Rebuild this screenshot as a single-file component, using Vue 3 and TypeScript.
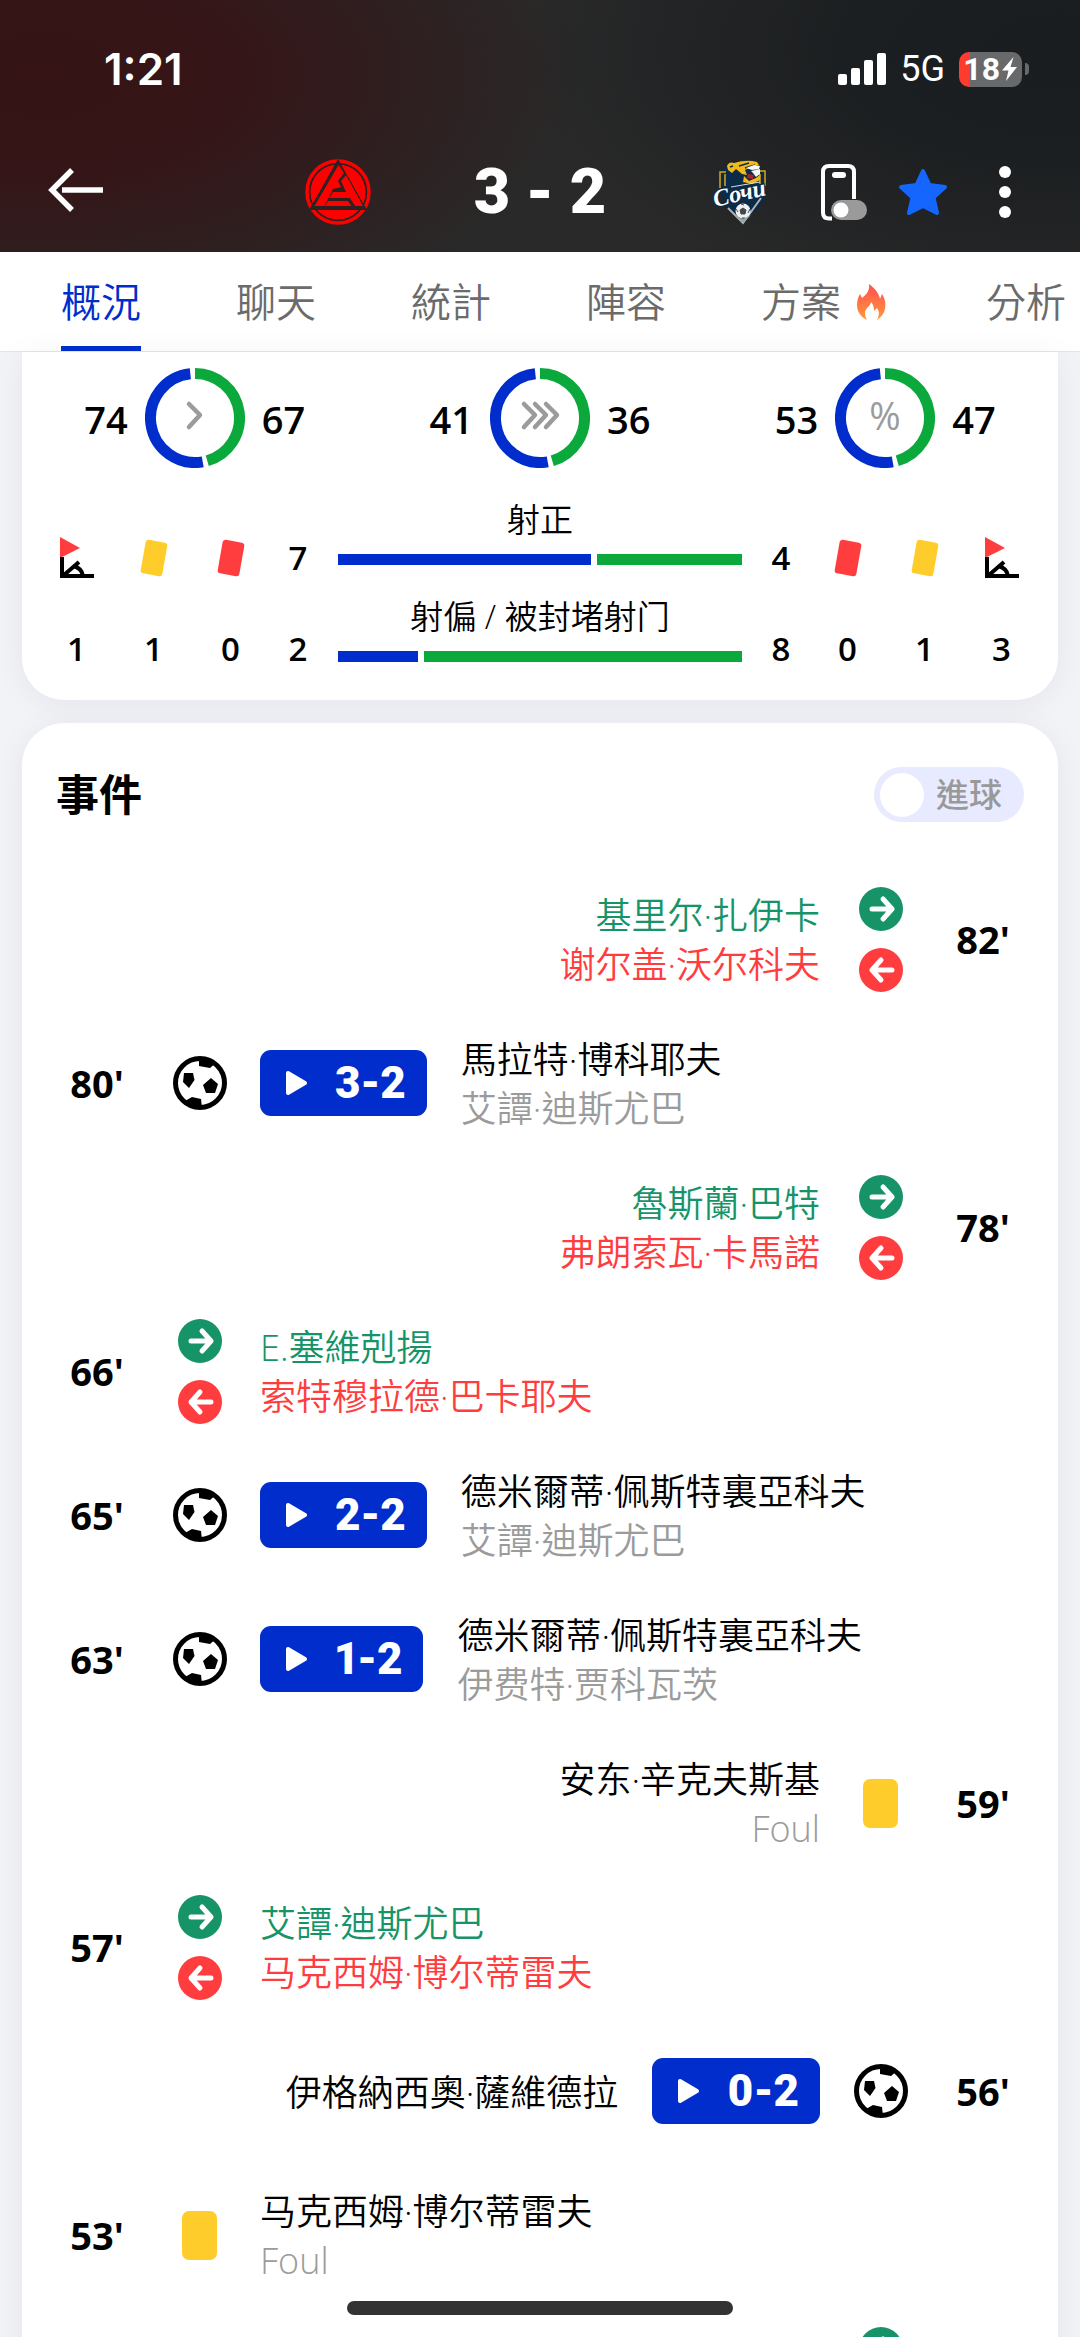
<script setup lang="ts">
import { ref } from 'vue'

type Side = 'home' | 'away'
type Kind = 'goal' | 'sub' | 'booked'

interface MatchEvent {
  minute: string
  side: Side
  kind: Kind
  first: string
  second?: string
  score?: string
}

interface Ring {
  home: number
  away: number
  icon: 'single' | 'triple' | 'percent'
}

const tabs = [
  { label: '概況', hot: false },
  { label: '聊天', hot: false },
  { label: '統計', hot: false },
  { label: '陣容', hot: false },
  { label: '方案', hot: true },
  { label: '分析', hot: false },
]
const activeTab = ref('概況')
const goalsOnly = ref(false)

const rings: Ring[] = [
  { home: 74, away: 67, icon: 'single' },
  { home: 41, away: 36, icon: 'triple' },
  { home: 53, away: 47, icon: 'percent' },
]

const homeCounts = [
  { icon: 'corner', value: 1 },
  { icon: 'yellow', value: 1 },
  { icon: 'red', value: 0 },
]
const awayCounts = [
  { icon: 'red', value: 0 },
  { icon: 'yellow', value: 1 },
  { icon: 'corner', value: 3 },
]
const shots = [
  { label: '射正', home: 7, away: 4 },
  { label: '射偏 / 被封堵射门', home: 2, away: 8 },
]

const events: MatchEvent[] = [
  { minute: "82'", side: 'away', kind: 'sub', first: '基里尔·扎伊卡', second: '谢尔盖·沃尔科夫' },
  { minute: "80'", side: 'home', kind: 'goal', score: '3-2', first: '馬拉特·博科耶夫', second: '艾譚·迪斯尤巴' },
  { minute: "78'", side: 'away', kind: 'sub', first: '魯斯蘭·巴特', second: '弗朗索瓦·卡馬諾' },
  { minute: "66'", side: 'home', kind: 'sub', first: 'E.塞維剋揚', second: '索特穆拉德·巴卡耶夫' },
  { minute: "65'", side: 'home', kind: 'goal', score: '2-2', first: '德米爾蒂·佩斯特裏亞科夫', second: '艾譚·迪斯尤巴' },
  { minute: "63'", side: 'home', kind: 'goal', score: '1-2', first: '德米爾蒂·佩斯特裏亞科夫', second: '伊费特·贾科瓦茨' },
  { minute: "59'", side: 'away', kind: 'booked', first: '安东·辛克夫斯基', second: 'Foul' },
  { minute: "57'", side: 'home', kind: 'sub', first: '艾譚·迪斯尤巴', second: '马克西姆·博尔蒂雷夫' },
  { minute: "56'", side: 'away', kind: 'goal', score: '0-2', first: '伊格納西奧·薩維德拉' },
  { minute: "53'", side: 'home', kind: 'booked', first: '马克西姆·博尔蒂雷夫', second: 'Foul' },
  { minute: '', side: 'away', kind: 'sub', first: '' },
]

// Arc on the ring's centre line around (50, 50); degrees clockwise from the top.
function arc(from: number, to: number): string {
  const point = (deg: number) => {
    const a = (deg * Math.PI) / 180
    return `${(50 + 44.5 * Math.sin(a)).toFixed(2)} ${(50 - 44.5 * Math.cos(a)).toFixed(2)}`
  }
  return `M${point(from)}A44.5 44.5 0 ${to - from > 180 ? 1 : 0} 1 ${point(to)}`
}
</script>

<template>
  <div class="screen">
    <header class="header">
      <div class="status">
        <span class="clock">1:21</span>
        <div class="status-right">
          <svg class="signal" width="48" height="32" viewBox="0 0 48 32" fill="#fff">
            <rect x="0" y="21" width="9" height="11" rx="2" />
            <rect x="13" y="15" width="9" height="17" rx="2" />
            <rect x="26" y="7" width="9" height="25" rx="2" />
            <rect x="39" y="0" width="9" height="32" rx="2" />
          </svg>
          <span class="network">5G</span>
          <div class="battery">
            <div class="battery-body">
              <span class="battery-text">18</span>
              <svg width="15" height="24" viewBox="0 0 15 24" fill="#fff"><path d="M11.500 0L0 13.500h6.500L4 24L15 10H8.500z" /></svg>
            </div>
            <span class="battery-nub"></span>
          </div>
        </div>
      </div>

      <div class="scorebar">
        <div class="bar-left">
          <button class="icon-btn" type="button" aria-label="返回">
            <svg width="58" height="46" viewBox="0 0 58 46" fill="none" stroke="#fff" stroke-width="5.500">
              <path d="M25 3L5 23L25 43" /><path d="M15 23H56" />
            </svg>
          </button>
        </div>
        <div class="scoreboard">
          <svg width="66" height="68" viewBox="0 0 66 68">
            <circle cx="33" cy="34" r="31" fill="none" stroke="#f00" stroke-width="3.500" />
            <circle cx="33" cy="34" r="27.500" fill="#f00" />
            <path d="M33 1L4 52H62z" fill="#2b2221" />
            <path d="M27 8Q10 14 6 36Q6 42 8 45L29 7zM39 8Q55 14 60 36Q60 42 58 45L37 7z" fill="#f00" />
            <path d="M33.500 7L39 15L33 23L36 29L28 31L19.500 48H9.500z" fill="#f00" />
            <path d="M41 17L58 48H50L45 40H24L28 34H41L36 23z" fill="#f00" />
            <path d="M23 43H43L46.500 48H20z" fill="#f00" />
          </svg>
          <h1 class="score">3 - 2</h1>
          <svg class="crest" width="66" height="68" viewBox="0 0 66 68">
            <path d="M11 14L20 6L50 9L57 17L56 42L34 66L14 46z" fill="#0b2b49" />
            <path d="M17 14H11V30M50 13H56V28M16 16V28M51 16V26" fill="none" stroke="#d5a81b" stroke-width="1.500" />
            <path d="M18 8Q20 3 25 5Q38 1 48 4L50 7L42 9L36 12L38 17L33 16L27 11L23 15L19 12z" fill="#f2b91d" />
            <path d="M21 9L24 8M30 8L40 5M36 10L46 7" stroke="#0b2b49" stroke-width="1.500" />
            <path d="M37 10L45 7L51 8L50 11L43 12zM42 13L51 11L51 16L47 19L44 15z" fill="#f5f7f8" />
            <path d="M39 16L45 17L44 21L38 20z" fill="#b01e2d" />
            <path d="M35 18L40 23L47 20L51 17V22L43 26L34 24z" fill="#f2b91d" />
            <path d="M19 50L34 65L52 40" fill="none" stroke="#aeb4b8" stroke-width="2" />
            <circle cx="34" cy="53" r="7.500" fill="#eef0f1" />
            <path d="M34 50L37 52L36 56L32 56L31 52zM27 51L29 54M41 51L39 55M33 60L36 60M32 46L35 47" fill="#44484b" stroke="#44484b" />
            <path d="M26 57L34 65L42 57L34 61z" fill="#9da2a5" />
            <path d="M22 29L51 24" stroke="#d8dde0" />
            <text class="crest-word" x="6" y="49" transform="rotate(-13 6 49)">Сочи</text>
          </svg>
        </div>
        <div class="bar-right">
          <button class="icon-btn" type="button" aria-label="懸浮窗">
            <svg width="52" height="58" viewBox="0 0 52 58">
              <path d="M14 55.500H11Q5 55.500 5 49.500V9Q5 3 11 3H30Q36 3 36 9V36" fill="none" stroke="#fff" stroke-width="4" />
              <rect x="14" y="9" width="14" height="6" rx="3" fill="#fff" />
              <rect x="13" y="37" width="36" height="20" rx="10" fill="#9a9a9a" />
              <circle cx="23" cy="47" r="7.500" fill="#fff" />
            </svg>
          </button>
          <button class="icon-btn" type="button" aria-label="收藏">
            <svg width="54" height="54" viewBox="0 0 54 54">
              <path d="M27 6L33.500 20L49 22L37.500 32.500L41 48L27 41L13 48L16.500 32.500L5 22L20.500 20z" fill="#1565ff" stroke="#1565ff" stroke-width="4" stroke-linejoin="round" />
            </svg>
          </button>
          <button class="icon-btn menu-btn" type="button" aria-label="更多">
            <svg width="36" height="54" viewBox="0 0 36 54" fill="#fff">
              <circle cx="18" cy="7" r="6" /><circle cx="18" cy="27" r="6" /><circle cx="18" cy="47" r="6" />
            </svg>
          </button>
        </div>
      </div>
    </header>

    <nav class="tabs">
      <button
        v-for="tab in tabs"
        :key="tab.label"
        type="button"
        class="tab"
        :class="{ active: activeTab === tab.label }"
        @click="activeTab = tab.label"
      >
        {{ tab.label }}
        <svg v-if="tab.hot" width="38" height="38" viewBox="0 0 38 38">
          <defs>
            <linearGradient id="flame" x1="0" y1="0" x2="0" y2="1">
              <stop offset="0" stop-color="#ff4e50" /><stop offset="1" stop-color="#ff9a3c" />
            </linearGradient>
          </defs>
          <path d="M16 1C20 4 26 9 27 16L29 11C32 16 33 20 32 26C31 31 28 34 24 37C26 33 27 29 24 25L21 28C21 24 20 21 18 19C17 24 12 25 12 30C12 33 13 35 14 37C8 34 4 29 4 22C4 18 5 14 7 11L9 15C14 11 17 7 16 1z" fill="url(#flame)" />
        </svg>
      </button>
    </nav>

    <main class="content">
      <section class="card stats-card">
        <div class="rings">
          <div v-for="ring in rings" :key="ring.icon" class="ring">
            <span class="ring-value left">{{ ring.home }}</span>
            <svg width="100" height="100" viewBox="0 0 100 100" fill="none">
              <path :d="arc(0, 164)" stroke="#0ba83c" stroke-width="11" />
              <path :d="arc(170, 354)" stroke="#002dcb" stroke-width="11" />
              <g stroke="#9b9b9b" stroke-width="4.500" stroke-linecap="round" stroke-linejoin="round">
                <path v-if="ring.icon === 'single'" d="M44 36L55 47L44 59" />
                <path v-if="ring.icon === 'triple'" d="M34 36L45 47L34 59M45 36L56 47L45 59M56 36L67 47L56 59" />
              </g>
              <text v-if="ring.icon === 'percent'" class="ring-percent" x="50" y="62" text-anchor="middle">%</text>
            </svg>
            <span class="ring-value">{{ ring.away }}</span>
          </div>
        </div>

        <div class="totals">
          <div class="counts">
            <div v-for="c in homeCounts" :key="c.icon" class="count">
              <svg v-if="c.icon === 'corner'" width="36" height="44" viewBox="0 0 36 44">
                <path d="M1 1L21 12L1 22z" fill="#ff3d3f" />
                <path d="M3 21V40H35M5 39L20 26M14 30Q23 32 24 40" fill="none" stroke="#000" stroke-width="4" />
              </svg>
              <span v-else class="mini-box"><i class="mini-card" :class="c.icon"></i></span>
              <span class="number">{{ c.value }}</span>
            </div>
          </div>
          <div class="counts">
            <div class="count">
              <span class="number">{{ shots[0].home }}</span>
              <span class="number">{{ shots[1].home }}</span>
            </div>
          </div>
          <div class="bars">
            <div v-for="shot in shots" :key="shot.label" class="shot">
              <span class="shot-label">{{ shot.label }}</span>
              <div class="bar">
                <span class="seg home" :style="{ flexGrow: shot.home }"></span>
                <span class="seg away" :style="{ flexGrow: shot.away }"></span>
              </div>
            </div>
          </div>
          <div class="counts">
            <div class="count">
              <span class="number">{{ shots[0].away }}</span>
              <span class="number">{{ shots[1].away }}</span>
            </div>
          </div>
          <div class="counts">
            <div v-for="c in awayCounts" :key="c.icon" class="count">
              <svg v-if="c.icon === 'corner'" width="36" height="44" viewBox="0 0 36 44">
                <path d="M1 1L21 12L1 22z" fill="#ff3d3f" />
                <path d="M3 21V40H35M5 39L20 26M14 30Q23 32 24 40" fill="none" stroke="#000" stroke-width="4" />
              </svg>
              <span v-else class="mini-box"><i class="mini-card" :class="c.icon"></i></span>
              <span class="number">{{ c.value }}</span>
            </div>
          </div>
        </div>
      </section>

      <section class="card events-card">
        <div class="events-head">
          <h2 class="events-title">事件</h2>
          <label class="switch">
            <input v-model="goalsOnly" type="checkbox" role="switch" />
            <span>進球</span>
          </label>
        </div>

        <ul class="events">
          <li v-for="(e, i) in events" :key="i" class="event" :class="e.side">
            <span class="minute">{{ e.minute }}</span>
            <span class="event-icon">
              <template v-if="e.kind === 'sub'">
                <svg width="44" height="44" viewBox="0 0 44 44" fill="none" stroke="#fff" stroke-width="5" stroke-linecap="round" stroke-linejoin="round">
                  <circle cx="22" cy="22" r="22" fill="#169468" stroke="none" />
                  <path d="M13 22H33M24 12L33 22L24 32" />
                </svg>
                <svg width="44" height="44" viewBox="0 0 44 44" fill="none" stroke="#fff" stroke-width="5" stroke-linecap="round" stroke-linejoin="round">
                  <circle cx="22" cy="22" r="22" fill="#ff3d3f" stroke="none" />
                  <path d="M33 22H13M22 12L13 22L22 32" />
                </svg>
              </template>
              <svg v-else-if="e.kind === 'goal'" width="54" height="54" viewBox="0 0 54 54">
                <circle cx="27" cy="27" r="24.500" fill="#fff" stroke="#000" stroke-width="5" />
                <path d="M26 2L26 10L37 12L43 7zM11 17H20L21.500 24L16 32L10 26zM38 22L45 28L42 37L33 37L30 29zM12 45L19 41L28 43L29 52L18 51z" />
              </svg>
              <i v-else class="booking"></i>
            </span>
            <button v-if="e.kind === 'goal'" type="button" class="replay">
              <svg width="24" height="28" viewBox="0 0 24 28" fill="#fff" stroke="#fff" stroke-width="4" stroke-linejoin="round">
                <path d="M3 4L20 14L3 24z" />
              </svg>
              <span>{{ e.score }}</span>
            </button>
            <span class="names" :class="e.kind">
              <span class="name">{{ e.first }}</span>
              <span v-if="e.second" class="name second">{{ e.second }}</span>
            </span>
          </li>
        </ul>
      </section>
    </main>

    <div class="home-indicator"></div>
  </div>
</template>

<style>
body {
  margin: 0;
  background: #f2f3f7;
}
</style>

<style scoped>
* {
  box-sizing: border-box;
}
.screen {
  position: relative;
  display: flex;
  flex-direction: column;
  height: 100vh;
  overflow: hidden;
  background: #f2f3f7;
  color: #000;
  font-family: "Open Sans", "Noto Sans CJK TC", sans-serif;
}
button {
  margin: 0;
  padding: 0;
  border: 0;
  background: none;
  color: inherit;
  font: inherit;
}
svg {
  display: block;
  flex: none;
}

.header {
  flex: none;
  padding-bottom: 6px;
  color: #fff;
  background:
    radial-gradient(ellipse 50% 110% at 4% 30%, #361416 0%, #351517 35%, rgba(53, 21, 23, 0) 100%),
    radial-gradient(ellipse 50% 110% at 98% 20%, #191d20 0%, #1c1f21 40%, rgba(28, 31, 33, 0) 100%),
    #292929;
}
.status {
  display: flex;
  align-items: center;
  justify-content: space-between;
  height: 138px;
  padding: 0 51px 0 104px;
}
.clock {
  font: 600 44px/50px Inter, sans-serif;
}
.status-right {
  display: flex;
  align-items: center;
}
.network {
  margin: 0 14px;
  font: 400 36px/40px Roboto, sans-serif;
}
.battery {
  display: flex;
  align-items: center;
  gap: 3px;
}
.battery-body {
  display: flex;
  align-items: center;
  justify-content: flex-end;
  gap: 2px;
  width: 63px;
  height: 35px;
  padding-right: 5px;
  border-radius: 10px;
  background: linear-gradient(90deg, #ff3b30 11px, #68696a 11px);
}
.battery-text {
  font: 700 32px/35px Roboto, sans-serif;
}
.battery-nub {
  width: 4px;
  height: 12px;
  border-radius: 0 4px 4px 0;
  background: #68696a;
}

.scorebar {
  display: grid;
  grid-template-columns: 1fr auto 1fr;
  align-items: center;
  height: 108px;
  padding: 0 57px 0 47px;
}
.scoreboard {
  display: grid;
  grid-template-columns: 66px 338px 66px;
  align-items: center;
  justify-items: center;
  margin-left: 10px;
}
.score {
  margin: 0;
  font: 900 63px/76px Roboto, sans-serif;
}
.crest {
  overflow: visible;
}
.crest-word {
  fill: #fff;
  stroke: #0b2b49;
  stroke-width: 2px;
  paint-order: stroke;
  font: italic 700 24px "Liberation Serif", serif;
}
.bar-right {
  display: flex;
  align-items: center;
  justify-content: flex-end;
  gap: 26px;
}
.menu-btn {
  margin-left: 11px;
}

.tabs {
  display: flex;
  flex: none;
  gap: 95px;
  height: 100px;
  padding-left: 61px;
  overflow: hidden;
  border-bottom: 1px solid #e4e5e9;
  background: #fff;
  color: #6b6b6b;
}
.tab {
  display: flex;
  flex: none;
  align-items: center;
  gap: 12px;
  border-top: 5px solid transparent;
  border-bottom: 5px solid transparent;
  font-size: 40px;
  font-weight: 350;
  line-height: 48px;
}
.tab.active {
  border-bottom-color: #002dcb;
  color: #002dcb;
}

.content {
  display: flex;
  flex: none;
  flex-direction: column;
  gap: 23px;
  padding: 0 22px;
}
.card {
  border-radius: 42px;
  background: #fff;
  box-shadow: 0 4px 32px rgba(20, 25, 50, 0.06);
}
.stats-card {
  padding: 16px 0 29px;
  border-top-left-radius: 0;
  border-top-right-radius: 0;
}
.rings {
  display: grid;
  grid-template-columns: repeat(3, 1fr);
}
.ring {
  display: grid;
  grid-template-columns: 1fr 100px 1fr;
  align-items: center;
  column-gap: 17px;
}
.ring-value {
  padding-top: 2px;
  font-size: 38px;
  font-weight: 600;
  line-height: 48px;
}
.ring-value.left {
  text-align: right;
}
.ring-percent {
  fill: #9b9b9b;
  font-size: 38px;
}
.totals {
  display: grid;
  grid-template-columns: 231px 58px 1fr 56px 231px;
  margin-top: 30px;
  padding: 0 18px 0 16px;
}
.counts {
  display: flex;
  padding-top: 38px;
}
.count {
  display: flex;
  flex: 1;
  flex-direction: column;
  align-items: center;
  gap: 47px;
}
.number {
  font-size: 33px;
  font-weight: 600;
  line-height: 44px;
}
.mini-box {
  display: flex;
  align-items: center;
  height: 44px;
}
.mini-card {
  width: 22px;
  height: 34px;
  border-radius: 3px;
  transform: rotate(10deg);
}
.mini-card.yellow {
  background: #ffcd2b;
}
.mini-card.red {
  background: #ff3d3f;
}
.bars {
  display: flex;
  flex-direction: column;
  gap: 30px;
  padding: 0 11px;
}
.shot {
  display: flex;
  flex-direction: column;
  gap: 12px;
}
.shot-label {
  font-size: 33px;
  font-weight: 350;
  line-height: 44px;
  text-align: center;
}
.bar {
  display: flex;
  gap: 6px;
  height: 11px;
}
.seg {
  flex-basis: 0;
}
.seg.home {
  background: #002dcb;
}
.seg.away {
  background: #0ba83c;
}

.events-card {
  padding-top: 44px;
}
.events-head {
  display: flex;
  align-items: center;
  justify-content: space-between;
  margin-bottom: 45px;
  padding: 0 34px;
}
.events-title {
  margin: 0;
  font-size: 43px;
  font-weight: 700;
  line-height: 55px;
}
.switch {
  display: flex;
  align-items: center;
  gap: 12px;
  height: 55px;
  padding: 0 22px 0 6px;
  border-radius: 28px;
  background: #e8ebff;
  color: #999;
  font-size: 33px;
  font-weight: 500;
  line-height: 44px;
}
.switch input {
  width: 44px;
  height: 44px;
  margin: 0;
  border-radius: 50%;
  background: #fff;
  appearance: none;
}
.events {
  margin: 0;
  padding: 0;
  list-style: none;
}
.event {
  display: flex;
  align-items: center;
  height: 144px;
  padding: 0 16px;
}
.event.away {
  flex-direction: row-reverse;
}
.minute {
  width: 118px;
  font-size: 38px;
  font-weight: 700;
  line-height: 48px;
  text-align: center;
}
.event-icon {
  display: flex;
  flex-direction: column;
  align-items: center;
  gap: 17px;
  width: 87px;
}
.booking {
  width: 35px;
  height: 49px;
  border-radius: 7px;
  background: #ffcd2b;
}
.replay {
  display: flex;
  align-items: center;
  gap: 26px;
  height: 66px;
  margin: 0 17px;
  padding: 0 21px 0 25px;
  border-radius: 11px;
  background: #002dcb;
  color: #fff;
  font: 900 44px/66px Roboto, sans-serif;
  font-variant-numeric: proportional-nums;
}
.names {
  display: flex;
  flex-direction: column;
  margin: 0 17px;
  padding-top: 2px;
  font-size: 36px;
  font-weight: 350;
  line-height: 49px;
}
.away .names {
  text-align: right;
}
.name {
  white-space: nowrap;
}
.second {
  color: #9b9b9b;
}
.sub .name {
  color: #169468;
}
.sub .second {
  color: #ff3d3f;
}
.home-indicator {
  position: absolute;
  bottom: 22px;
  left: 50%;
  width: 386px;
  height: 14px;
  border-radius: 7px;
  background: #333;
  transform: translateX(-50%);
}
</style>
